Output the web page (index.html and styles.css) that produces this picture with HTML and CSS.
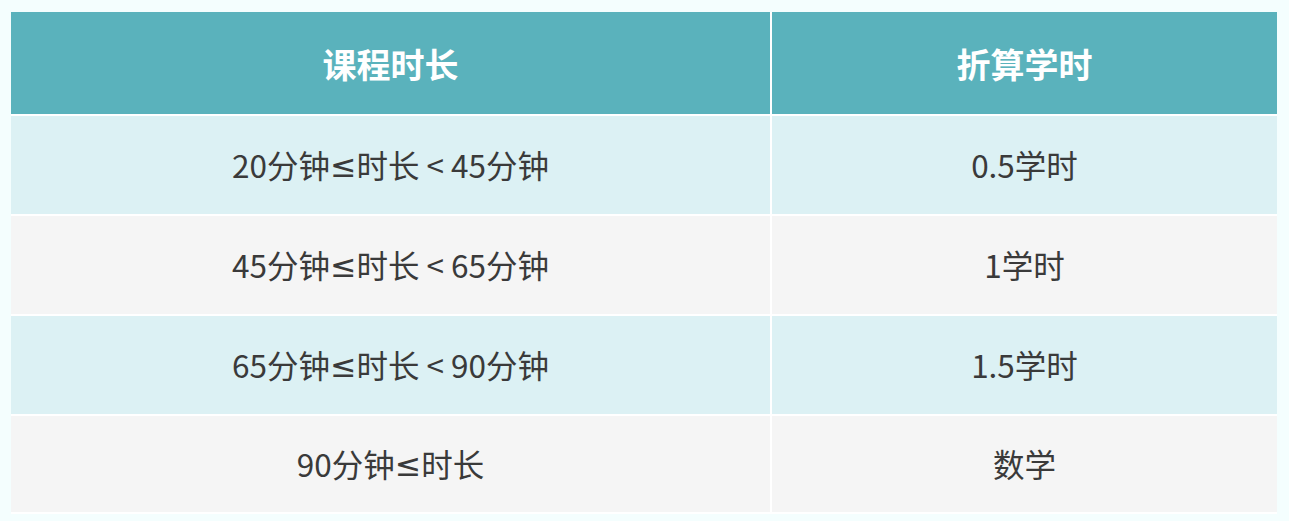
FILE: index.html
```html
<!DOCTYPE html>
<html lang="zh">
<head>
<meta charset="utf-8">
<link rel="stylesheet" href="styles.css">
</head>
<body>
<div class="table">
  <div class="cell head">课程时长</div>
  <div class="cell head">折算学时</div>
  <div class="cell odd">20分钟<span class="sym">≤</span>时长 &lt; 45分钟</div>
  <div class="cell odd">0.5学时</div>
  <div class="cell even">45分钟<span class="sym">≤</span>时长 &lt; 65分钟</div>
  <div class="cell even">1学时</div>
  <div class="cell odd">65分钟<span class="sym">≤</span>时长 &lt; 90分钟</div>
  <div class="cell odd">1.5学时</div>
  <div class="cell even">90分钟<span class="sym">≤</span>时长</div>
  <div class="cell even">数学</div>
</div>
</body>
</html>
```
FILE: styles.css
```css
html, body {
  margin: 0;
  background: #f4fefe;
}
body {
  padding: 12px 12px 0 11px;
  font-family: "Noto Sans CJK SC", "Noto Sans", sans-serif;
}
.table {
  width: 1266px;
  display: grid;
  grid-template-columns: 759px 505px;
  grid-template-rows: 102px 98px 98px 98px 96px;
  gap: 2px;
  padding-bottom: 2px;
  background: #ffffff;
}
.cell {
  display: flex;
  align-items: center;
  justify-content: center;
  white-space: pre;
  font-size: 31.5px;
  color: #3a3a3a;
  padding-bottom: 2px;
}
.sym {
  font-family: "Noto Sans", "DejaVu Sans", sans-serif;
}
.head {
  background: #5ab2bc;
  color: #ffffff;
  font-weight: 700;
  font-size: 34px;
  padding-bottom: 0;
}
.odd { background: #dcf1f4; }
.even { background: #f5f5f5; }
```
